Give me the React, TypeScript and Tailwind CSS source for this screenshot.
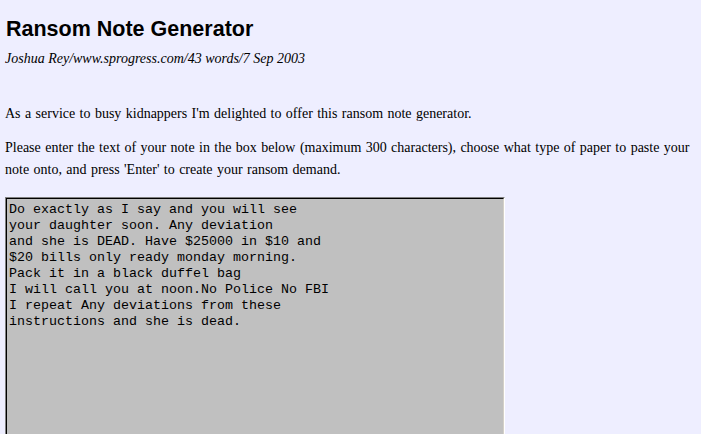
const NOTE = `Do exactly as I say and you will see
your daughter soon. Any deviation
and she is DEAD. Have $25000 in $10 and
$20 bills only ready monday morning.
Pack it in a black duffel bag
I will call you at noon.No Police No FBI
I repeat Any deviations from these
instructions and she is dead.`;

export default function App() {
  return (
    <div className="min-h-[434px] w-[701px] overflow-hidden bg-[#eeeeff] px-[5px] pt-[17px] text-black">
      <h1 className="m-0 pl-[1px] text-[21.5px] leading-[25px] font-bold font-['Liberation_Sans',Arial,sans-serif]">
        Ransom Note Generator
      </h1>
      <div className="mt-[8px] text-[14px] leading-[18px] italic font-['Liberation_Serif','Times_New_Roman',serif]">
        Joshua Rey/www.sprogress.com/43 words/7 Sep 2003
      </div>

      <div className="mt-[35px] text-[14px] leading-[22px] [word-spacing:0.9px] font-['Liberation_Serif','Times_New_Roman',serif]">
        <p>As a service to busy kidnappers I'm delighted to offer this ransom note generator.</p>
        <p className="mt-[12px]">
          Please enter the text of your note in the box below (maximum 300 characters), choose what type of paper to paste
          your note onto, and press 'Enter' to create your ransom demand.
        </p>
      </div>

      <form className="mt-[16px]">
        <div className="w-[500px] border border-t-[#808080] border-l-[#808080] border-r-white border-b-white">
          <div className="border border-t-black border-l-black border-r-[#d4d0c8] border-b-[#d4d0c8]">
            <textarea
              readOnly
              defaultValue={NOTE}
              className="block h-[260px] w-full resize-none bg-[#c0c0c0] px-[2px] pt-[3px] text-[13.33px] leading-[16px] text-black outline-none font-['Liberation_Mono','Courier_New',monospace]"
            />
          </div>
        </div>
      </form>
    </div>
  );
}
